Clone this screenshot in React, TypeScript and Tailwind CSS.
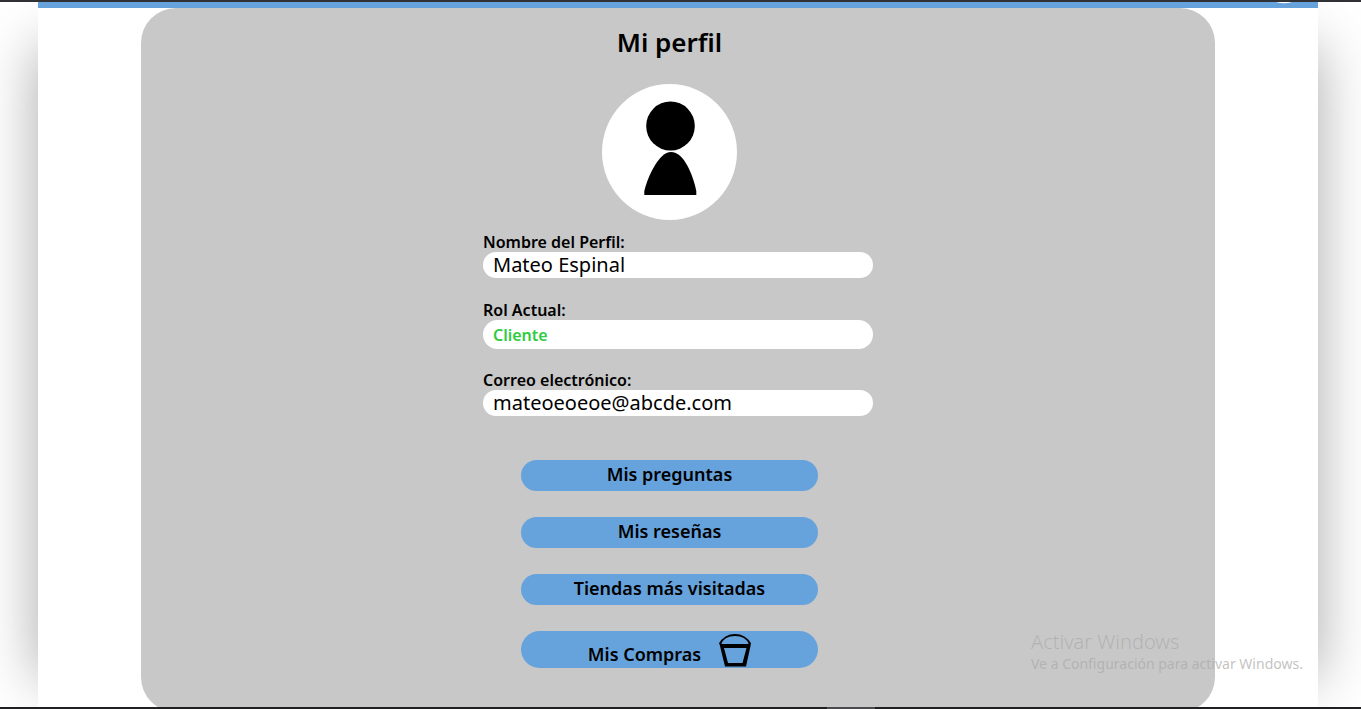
import type { ReactNode } from "react";

function Field({
  id,
  label,
  value,
  type = "text",
  className,
}: {
  id: string;
  label: string;
  value: string;
  type?: string;
  className: string;
}) {
  return (
    <div className="flex flex-col">
      <label htmlFor={id} className="text-base leading-5 font-semibold">
        {label}
      </label>
      <input
        id={id}
        type={type}
        defaultValue={value}
        className={`w-full rounded-full bg-white px-2.5 outline-none ${className}`}
      />
    </div>
  );
}

function ActionButton({ children }: { children: ReactNode }) {
  return (
    <button
      type="button"
      className="flex h-[31px] w-[297px] items-center justify-center rounded-full bg-[#66a3dd] pb-[3px] text-lg leading-6 font-semibold"
    >
      {children}
    </button>
  );
}

function Avatar() {
  return (
    <svg viewBox="0 0 135 136" className="mt-6 h-[136px] w-[135px]" role="img" aria-label="Foto de perfil">
      <ellipse cx="67.5" cy="68" rx="67.5" ry="68" fill="#fff" />
      <ellipse cx="68.5" cy="42" rx="24.3" ry="24.5" />
      <path d="M42.3 111 V107 C46 92 57 68 69 68 C82 68 91 91 94.3 107 V111 Z" />
    </svg>
  );
}

function BucketIcon() {
  return (
    <svg viewBox="0 0 32 33" className="h-[33px] w-8" fill="none" stroke="#000" aria-hidden="true">
      <path d="M1 10 C6 -2 26 -2 31 10" strokeWidth="2" />
      <path d="M0 8.5 L3 10 H29 L32 8.5 L31.5 12 L27 32.5 H6 L1 12 Z M5 14 L9 29 H23.5 L27.5 14 Z" fill="#000" fillRule="evenodd" stroke="none" />
    </svg>
  );
}

export default function App() {
  return (
    <div className="flex h-screen flex-col overflow-hidden bg-white font-['Noto_Sans','Open_Sans',sans-serif] text-black">
      <div className="h-0.5 shrink-0 bg-[#303134]" />
      <div className="relative isolate min-h-0 flex-1 overflow-hidden pr-[43px] pl-[38px]">
        <div className="absolute top-11 right-[43px] bottom-7 left-[38px] -z-10 shadow-[0_0_55px_rgba(0,0,0,0.34)]" />
        <div className="min-h-full bg-white">
          <header className="flex h-1.5 justify-end bg-[#66a3dd] pr-[26px]">
            <svg viewBox="0 0 16 2" className="h-0.5 w-4" aria-hidden="true">
              <path d="M0 0 H16 Q8 2.4 0 0 Z" fill="#fff" />
            </svg>
          </header>
          <main className="mx-[103px] flex flex-col items-center rounded-[35px] bg-[#c8c8c8] pt-4 pb-11">
            <div className="flex w-full max-w-[390px] flex-col">
              <div className="flex flex-col items-center pr-[17px]">
                <h1 className="text-[26px] leading-9 font-semibold">Mi perfil</h1>
                <Avatar />
              </div>
              <form className="flex flex-col pt-3">
                <Field id="nombre" label="Nombre del Perfil:" value="Mateo Espinal" className="mb-[22px] h-[26px] text-xl" />
                <Field id="rol" label="Rol Actual:" value="Cliente" className="mb-[21px] h-[29px] text-base font-semibold text-[#2ecc40]" />
                <Field id="correo" label="Correo electrónico:" value="mateoeoeoe@abcde.com" type="email" className="h-[26px] text-xl" />
              </form>
              <nav className="mt-11 flex flex-col items-center gap-[26px] pr-[17px]">
                <ActionButton>Mis preguntas</ActionButton>
                <ActionButton>Mis reseñas</ActionButton>
                <ActionButton>Tiendas más visitadas</ActionButton>
                <button
                  type="button"
                  className="flex h-[37px] w-[297px] items-end justify-center gap-[18px] rounded-full bg-[#66a3dd] pb-px text-lg leading-[26px] font-semibold"
                >
                  Mis Compras
                  <BucketIcon />
                </button>
              </nav>
            </div>
          </main>
        </div>
        <aside className="pointer-events-none absolute right-[54px] bottom-[33px] w-[276px] whitespace-nowrap text-[#a8a8a8]/70">
          <p className="text-xl leading-6 font-light">Activar Windows</p>
          <p className="text-sm leading-5">Ve a Configuración para activar Windows.</p>
        </aside>
      </div>
      <div className="flex h-0.5 shrink-0 justify-end bg-[#201f21] pr-[486px]">
        <div className="w-12 bg-[#4b4b4f]" />
      </div>
    </div>
  );
}
